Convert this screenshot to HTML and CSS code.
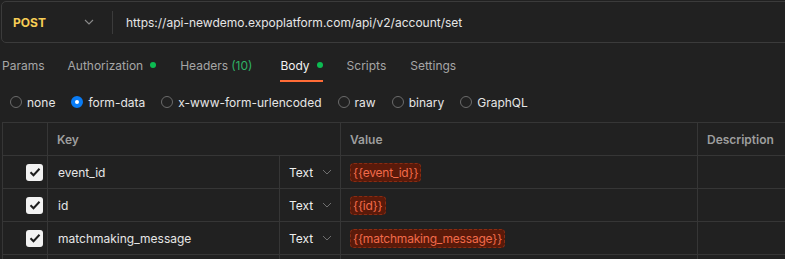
FILE: index.html
```html
<!DOCTYPE html>
<html lang="en">

<head>
    <meta charset="UTF-8">
    <meta name="viewport" content="width=device-width, initial-scale=1.0">
    <link rel="stylesheet" href="styles.css">
    <title>Request</title>
</head>

<body>
    <div class="url-bar">
        <div class="method">
            <span class="method-name">POST</span>
            <svg class="chevron" width="10" height="6" viewBox="0 0 10 6"><path d="M1 1l4 4 4-4" fill="none" stroke="#8a8a8a" stroke-width="1.1"/></svg>
        </div>
        <div class="divider"></div>
        <div class="url">https://api-newdemo.expoplatform.com/api/v2/account/set</div>
    </div>

    <div class="tabs">
        <div class="tab">Params</div>
        <div class="tab">Authorization <span class="dot"></span></div>
        <div class="tab">Headers <span class="count">(10)</span></div>
        <div class="tab active">Body <span class="dot"></span></div>
        <div class="tab">Scripts</div>
        <div class="tab">Settings</div>
    </div>

    <div class="radios">
        <label class="radio"><span class="circle"></span>none</label>
        <label class="radio"><span class="circle checked"></span>form-data</label>
        <label class="radio"><span class="circle"></span>x-www-form-urlencoded</label>
        <label class="radio"><span class="circle"></span>raw</label>
        <label class="radio"><span class="circle"></span>binary</label>
        <label class="radio"><span class="circle"></span>GraphQL</label>
    </div>

    <div class="table">
        <div class="cell head"></div>
        <div class="cell head span2">Key</div>
        <div class="cell head">Value</div>
        <div class="cell head">Description</div>

        <div class="cell check"><span class="box"><svg width="12" height="10" viewBox="0 0 12 10"><path d="M1.5 5.2l3 3 6-6.4" fill="none" stroke="#1c1c1c" stroke-width="2"/></svg></span></div>
        <div class="cell key">event_id</div>
        <div class="cell type">Text <svg width="10" height="6" viewBox="0 0 10 6"><path d="M1 1l4 4 4-4" fill="none" stroke="#6f6f6f" stroke-width="1"/></svg></div>
        <div class="cell value"><span class="var">{{event_id}}</span></div>
        <div class="cell"></div>

        <div class="cell check"><span class="box"><svg width="12" height="10" viewBox="0 0 12 10"><path d="M1.5 5.2l3 3 6-6.4" fill="none" stroke="#1c1c1c" stroke-width="2"/></svg></span></div>
        <div class="cell key">id</div>
        <div class="cell type">Text <svg width="10" height="6" viewBox="0 0 10 6"><path d="M1 1l4 4 4-4" fill="none" stroke="#6f6f6f" stroke-width="1"/></svg></div>
        <div class="cell value"><span class="var">{{id}}</span></div>
        <div class="cell"></div>

        <div class="cell check"><span class="box"><svg width="12" height="10" viewBox="0 0 12 10"><path d="M1.5 5.2l3 3 6-6.4" fill="none" stroke="#1c1c1c" stroke-width="2"/></svg></span></div>
        <div class="cell key">matchmaking_message</div>
        <div class="cell type">Text <svg width="10" height="6" viewBox="0 0 10 6"><path d="M1 1l4 4 4-4" fill="none" stroke="#6f6f6f" stroke-width="1"/></svg></div>
        <div class="cell value"><span class="var">{{matchmaking_message}}</span></div>
        <div class="cell"></div>

        <div class="cell"></div>
        <div class="cell"></div>
        <div class="cell"></div>
        <div class="cell"></div>
        <div class="cell"></div>
    </div>
</body>

</html>
```

FILE: styles.css
```css
body {
    margin: 0;
    background-color: #212121;
    font-family: Inter, "Noto Sans", sans-serif;
    font-size: 12px;
    color: #e6e6e6;
    overflow: hidden;
}

.url-bar {
    display: flex;
    align-items: center;
    height: 40px;
    margin: 1px 0 0 1px;
    width: 800px;
    border: 1px solid #3b3b3b;
    border-radius: 5px;
}

.method {
    display: flex;
    align-items: center;
    justify-content: space-between;
    width: 81px;
    padding: 0 18px 0 11px;
}

.method-name {
    color: #f7cd55;
    font-weight: 700;
}

.divider {
    width: 1px;
    height: 23px;
    background-color: #3b3b3b;
}

.url {
    padding-left: 13px;
}

.tabs {
    display: flex;
    gap: 24px;
    height: 32px;
    margin-top: 7px;
    padding-left: 2px;
}

.tab {
    display: flex;
    align-items: center;
    gap: 7px;
    color: #a6a6a6;
    border-bottom: 2px solid transparent;
    box-sizing: border-box;
    height: 32px;
}

.tab:nth-child(2) {
    margin-left: -1px;
}

.tab.active {
    color: #f2f2f2;
    border-bottom-color: #ff6c37;
    margin-left: 4px;
}

.dot {
    width: 6px;
    height: 6px;
    border-radius: 50%;
    background-color: #0cbb52;
}

.count {
    color: #2fb266;
    margin-left: -4px;
}

.radios {
    display: flex;
    gap: 16px;
    height: 40px;
    align-items: center;
    padding-left: 10px;
}

.radio {
    display: flex;
    align-items: center;
    gap: 5px;
    color: #e6e6e6;
}

.circle {
    width: 10px;
    height: 10px;
    border: 1px solid #6b6b6b;
    border-radius: 50%;
}

.circle.checked {
    width: 4px;
    height: 4px;
    border: 4px solid #0a7cf5;
    background-color: #ffffff;
}

.table {
    display: grid;
    grid-template-columns: 45px 232px 61px 357px 100px;
    grid-auto-rows: 33px;
    margin-left: 2px;
    border-top: 1px solid #363636;
    border-left: 1px solid #363636;
}

.cell {
    display: flex;
    align-items: center;
    border-right: 1px solid #363636;
    border-bottom: 1px solid #363636;
    padding-left: 9px;
}

.head {
    color: #9e9e9e;
    font-weight: 600;
}

.span2 {
    grid-column: span 2;
}

.check {
    justify-content: flex-end;
    padding: 0 4px 0 0;
}

.box {
    display: flex;
    align-items: center;
    justify-content: center;
    width: 17px;
    height: 17px;
    border-radius: 3px;
    background-color: #f2f2f2;
}

.key {
    padding-left: 10px;
}

.type {
    gap: 9px;
    color: #eeeeee;
}

.var {
    padding: 1px 2px;
    border: 1px dashed #8a2c12;
    border-radius: 4px;
    background-color: #5a1a0a;
    color: #f26b4a;
    letter-spacing: -0.2px;
}
```
